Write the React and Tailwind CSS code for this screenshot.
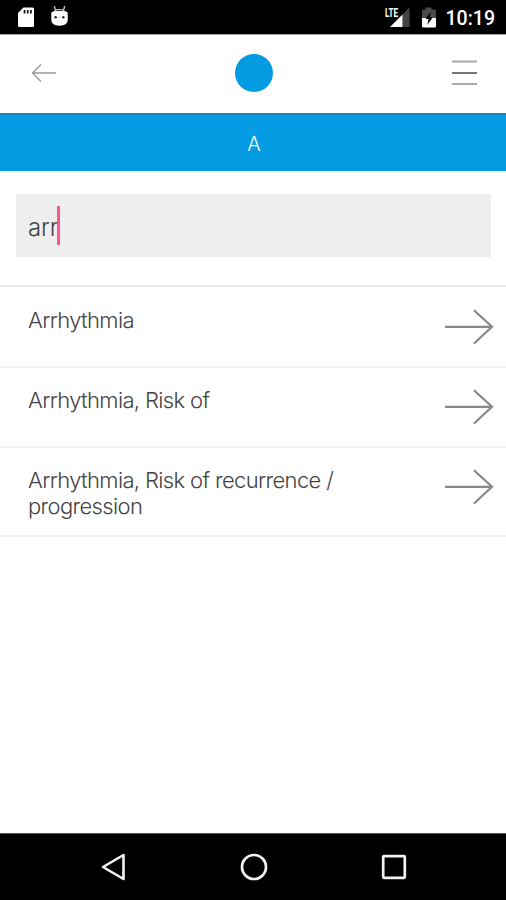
const results = [
  { label: "Arrhythmia", height: "h-20" },
  { label: "Arrhythmia, Risk of", height: "h-20" },
  { label: "Arrhythmia, Risk of recurrence / progression", height: "h-[89px]" },
];

const StatusBar = () => (
  <div className="flex h-[34px] shrink-0 items-start bg-black text-white">
    <svg className="mt-[6px] ml-[17px] h-[22px] w-[18px]" viewBox="0 0 18 22">
      <path
        d="M6.5 1.5H15.5Q17 1.5 17 3V19.5Q17 21 15.5 21H2.5Q1 21 1 19.5V7Z"
        fill="#fff"
      />
      <path d="M7.5 4v3.5M10.7 4v3.5M13.9 4v3.5" stroke="#111" strokeWidth="1.7" />
    </svg>
    <svg className="mt-[5px] ml-[15px] h-[22px] w-[20px]" viewBox="0 0 20 22">
      <path
        d="M4.3 1L5.8 6.5M14.7 1L13.2 6.5M5 4.6H14"
        stroke="#bbb"
        strokeWidth="1.4"
      />
      <path
        d="M1.3 7.5L4 6H15L17.7 7.5V15Q17.7 20.7 9.5 20.7Q1.3 20.7 1.3 15Z"
        fill="#fff"
      />
      <circle cx="5.6" cy="12.3" r="1.2" fill="#222" />
      <circle cx="13.4" cy="12.3" r="1.2" fill="#222" />
      <path d="M8 12.3h3" stroke="#ccc" strokeWidth=".8" />
    </svg>
    <div className="ml-auto flex items-start">
      <span className="mt-[6px] w-[5px] origin-left scale-x-[.62] font-['Roboto',sans-serif] text-[13px] leading-[13px] font-bold">
        LTE
      </span>
      <svg className="mt-[7px] h-[20px] w-[20px]" viewBox="0 0 20 20">
        <path d="M12.5 7.5L19.5 .5V20H12.5Z" fill="#444" />
        <path d="M0 20L12.5 7.5V20Z" fill="#fff" />
      </svg>
      <svg className="mt-[7px] ml-[11px] h-[21px] w-[16px]" viewBox="0 0 16 21">
        <path d="M1 11V4Q1 2.5 2.5 2.5H4.5V.5H10.5V2.5H13.5Q15 2.5 15 4V11Z" fill="#4a4a4a" />
        <path d="M1 11H15V19Q15 20.5 13.5 20.5H2.5Q1 20.5 1 19Z" fill="#fff" />
        <path d="M9.5 5L4.5 12H7.5L6.3 18L11.7 10.3H8.7Z" fill="#000" />
      </svg>
      <span className="mt-[7px] mr-[11px] ml-[9px] font-['Roboto',sans-serif] text-[19.5px] leading-[24px] font-medium">
        10:19
      </span>
    </div>
  </div>
);

const Header = () => (
  <header className="flex h-[79px] shrink-0 items-center justify-between border-t border-[#aaa] bg-white pr-[29px] pb-[2px] pl-[31px]">
    <svg className="h-[20px] w-[26px]" viewBox="0 0 26 20" fill="none">
      <path
        d="M25 10H1.5M10 1.5L1.5 10L10 18.5"
        stroke="#999"
        strokeWidth="1.4"
      />
    </svg>
    <div className="mr-[2px] h-[38px] w-[38px] rounded-full bg-[#039be2]" />
    <svg className="h-[26px] w-[25px]" viewBox="0 0 25 26" fill="none">
      <path d="M0 1.5H25M0 24H25" stroke="#aaa" strokeWidth="2" />
      <path d="M0 13H25" stroke="#777" strokeWidth="2" />
    </svg>
  </header>
);

const ArrowRight = () => (
  <svg className="mt-[21px] h-[36px] w-[50px] shrink-0" viewBox="0 0 50 36" fill="none">
    <path d="M1 17.8H48M30 1.2L48 17.8L30 34.5" stroke="#888" strokeWidth="2.2" />
  </svg>
);

const ResultRow = ({ label, height }) => (
  <li className={`flex justify-between border-b-2 border-[#f1f1f1] pr-[12px] pl-[28px] ${height}`}>
    <span className="mt-[19px] w-[340px] text-[22px] leading-[26px] tracking-[-0.63px]">
      {label}
    </span>
    <ArrowRight />
  </li>
);

const NavBar = () => (
  <nav className="flex h-[67px] shrink-0 items-center justify-between border-t border-[#555] bg-black pr-[97px] pl-[99px]">
    <svg className="h-[30px] w-[28px]" viewBox="0 0 28 30" fill="none">
      <path d="M24.5 3V27L4 15Z" stroke="#f2f2f2" strokeWidth="2.6" strokeLinejoin="round" />
    </svg>
    <svg className="ml-px h-[30px] w-[30px]" viewBox="0 0 30 30" fill="none">
      <circle cx="15" cy="15" r="12" stroke="#f2f2f2" strokeWidth="2.7" />
    </svg>
    <svg className="h-[30px] w-[30px]" viewBox="0 0 30 30" fill="none">
      <rect x="4.2" y="4.2" width="21.6" height="21.6" rx=".8" stroke="#f2f2f2" strokeWidth="2.7" />
    </svg>
  </nav>
);

const App = () => {
  return (
    <div className="flex h-[900px] w-[506px] flex-col overflow-hidden bg-white font-['Inter',sans-serif] font-light text-[#444]">
      <StatusBar />
      <Header />
      <div className="flex h-[58px] shrink-0 items-center justify-center border-t-2 border-[#1686bd] bg-[#039be2] pt-px pl-[2px] text-[20px] text-white">
        A
      </div>
      <div className="shrink-0 border-b-2 border-[#ebebeb] px-[15px] pt-[23px] pb-[28px] pl-[16px]">
        <div className="flex h-[63px] items-center bg-[#eee] pl-[12px]">
          <span className="mt-[4px] text-[24px] tracking-[-0.2px]">arr</span>
          <span className="-ml-px h-[39px] w-[3px] bg-[#ff5690]" />
        </div>
      </div>
      <ul className="flex-1 pt-px">
        {results.map((result) => (
          <ResultRow key={result.label} {...result} />
        ))}
      </ul>
      <NavBar />
    </div>
  );
};

export default App;
